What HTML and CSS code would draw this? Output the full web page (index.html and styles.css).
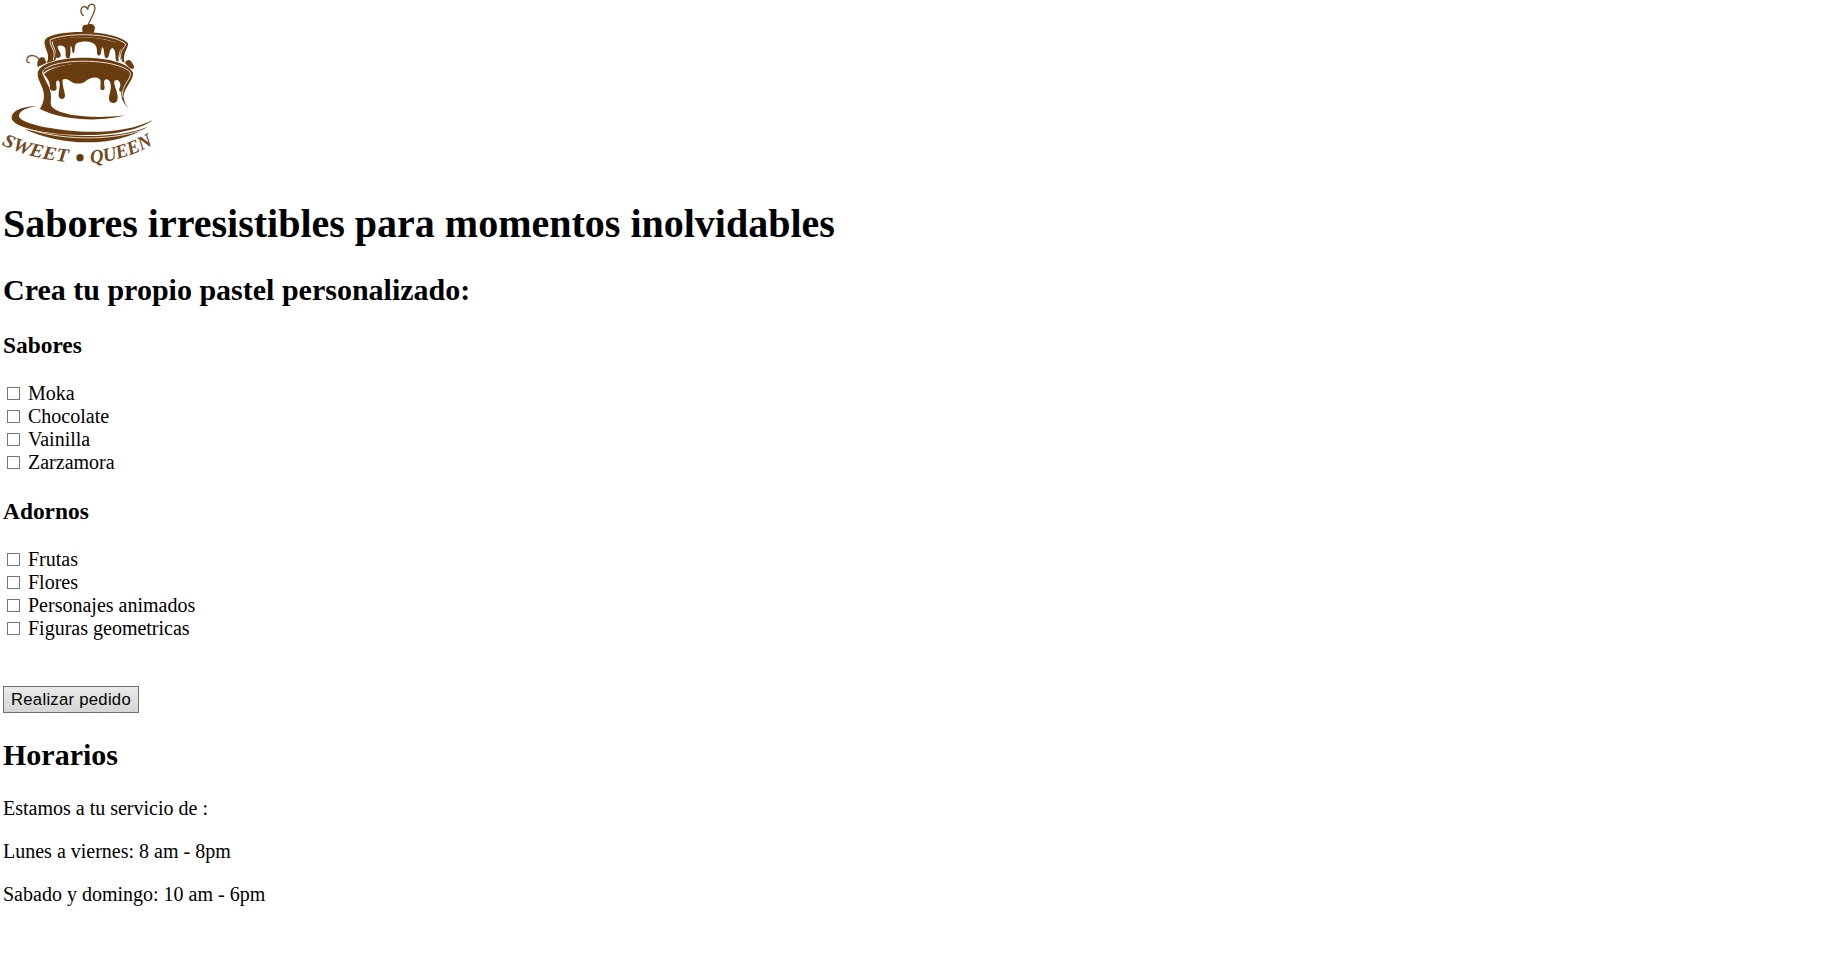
FILE: index.html
```html
<!DOCTYPE html>
<html lang="es">
<head>
<meta charset="utf-8">
<title>Sweet Queen</title>
<link rel="stylesheet" href="styles.css">
</head>
<body>
<header class="brand">
<svg class="logo" viewBox="9 9 456 495" role="img" aria-label="Sweet Queen">
  <defs>
    <path id="arc-left" d="M4 433 Q85 478 225 488"/>
    <path id="arc-right" d="M272 490 Q380 482 472 427"/>
  </defs>
  <!-- cherry -->
  <path class="line" d="M264 76 C273 52 290 32 284 18 C277 8 263 14 263 29 C258 14 244 19 243 30 C242 38 246 44 250 47"/>
  <path class="fill" d="M247 83 C249 71 262 77 267 73 C275 69 288 76 284 88 L281 98 L249 98 C247 94 246 89 247 83Z"/>
  <!-- top tier -->
  <path class="fill" d="M137 117 C165 89 342 86 384 130 C386 145 366 160 374 188 L364 184 C352 160 364 152 366 138 C320 105 200 105 155 126 C158 145 172 155 167 180 L140 190 C154 160 130 145 134 122Z"/>
  <path class="fill" d="M158 125 C200 105 320 107 370 139 C357 150 354 168 356 184 L349 184 C344 170 350 152 338 144 C326 145 330 174 320 175 C309 174 316 148 307 142 C302 145 307 165 297 167 C287 166 294 151 288 139 C280 120 235 122 228 132 C221 141 227 158 220 159 C214 157 219 142 212 137 C210 145 215 174 204 175 C192 174 200 153 195 143 C188 135 178 135 173 139 C173 152 184 157 182 169 C177 177 169 174 166 170 C171 150 161 145 158 125Z"/>
  <path class="gap" d="M378 133 C336 96 190 98 150 120 C150 145 169 148 160 180 M378 133 C370 148 354 158 366 186"/>
  <!-- side cherries -->
  <path class="line" d="M119 182 C111 164 86 161 81 177 C79 184 83 188 88 188"/>
  <path class="fill" d="M113 201 C109 185 117 171 127 172 C137 172 134 181 140 188Z M375 190 C378 177 392 177 396 188 C400 195 405 198 400 207 L390 205Z"/>
  <!-- bottom tier -->
  <path class="fill" d="M113 222 C113 160 370 155 399 218 C402 240 372 262 371 289 C372 306 377 314 386 324 C364 306 360 284 367 263 C374 246 390 232 386 222 C340 184 180 180 130 218 C127 236 154 257 153 291 C153 305 150 314 157 322 C190 353 301 355 374 346 C308 366 190 363 120 327 C151 275 113 252 113 222Z"/>
  <path class="fill" d="M132 222 C180 178 340 180 391 224 C385 240 372 250 370 267 C367 280 355 277 358 266 C365 254 359 241 350 240 C333 242 351 266 353 288 C354 303 349 309 340 309 C328 309 325 299 328 286 C333 268 337 244 321 238 C307 239 314 252 314 264 C313 273 302 273 301 264 C302 250 304 243 298 236 C283 228 266 236 255 245 C245 252 226 253 215 246 C205 238 195 234 188 239 C186 259 195 274 195 288 C194 300 178 299 176 288 C175 273 184 250 176 242 C165 239 169 256 170 264 C170 276 149 275 149 263 C152 248 142 235 132 222Z"/>
  <path class="gap" d="M131 228 C124 214 130 208 143 202 C190 175 340 177 386 212 C400 222 383 240 376 254 C366 270 367 284 369 292"/>
  <!-- plate -->
  <path class="fill" d="M107 319 C58 319 27 340 37 360 C65 408 370 432 459 359 C405 388 330 397 260 395 C160 391 56 370 57 347 C58 333 78 324 107 319Z"/>
  <path class="fill" d="M72 387 C180 412 350 420 443 380 C350 442 190 441 72 387Z"/>
  <path class="gap" d="M95 390 C200 424 350 420 436 387"/>
  <text class="name"><textPath href="#arc-left" textLength="208" lengthAdjust="spacingAndGlyphs">SWEET</textPath></text>
  <circle class="fill" cx="240" cy="473" r="11"/>
  <text class="name"><textPath href="#arc-right" textLength="198" lengthAdjust="spacingAndGlyphs">QUEEN</textPath></text>
</svg>
</header>
<main>
<h1>Sabores irresistibles para momentos inolvidables</h1>
<h2>Crea tu propio pastel personalizado:</h2>
<form class="order">
<h3>Sabores</h3>
<label class="option"><input type="checkbox">Moka</label>
<label class="option"><input type="checkbox">Chocolate</label>
<label class="option"><input type="checkbox">Vainilla</label>
<label class="option"><input type="checkbox">Zarzamora</label>
<h3 class="extras">Adornos</h3>
<label class="option"><input type="checkbox">Frutas</label>
<label class="option"><input type="checkbox">Flores</label>
<label class="option"><input type="checkbox">Personajes animados</label>
<label class="option"><input type="checkbox">Figuras geometricas</label>
<button class="submit" type="button">Realizar pedido</button>
</form>
</main>
<footer>
<h2>Horarios</h2>
<p>Estamos a tu servicio de :</p>
<p>Lunes a viernes: 8 am - 8pm</p>
<p>Sabado y domingo: 10 am - 6pm</p>
</footer>
</body>
</html>
```
FILE: styles.css
```css
body {
  margin: 0;
  padding: 3px 3px 0;
  background: #fff;
  color: #000;
  font: 20px/23px "Liberation Serif", "Times New Roman", serif;
}
.brand { height: 170px; }
.logo { display: block; width: 152px; height: 165px; overflow: visible; }
.fill { fill: #693c10; }
.line { fill: none; stroke: #79522c; stroke-width: 4; stroke-linecap: round; }
.gap { fill: none; stroke: #e9e0d8; stroke-width: 3; }
.name {
  fill: #75491f;
  font: italic bold 58px "Liberation Serif", serif;
}
h1 { margin: 28px 0 26px; font-size: 40px; line-height: 46px; }
h2 { margin: 25px 0; font-size: 30px; line-height: 34px; }
h3 { margin: 23px 0; font-size: 23.4px; line-height: 27px; }
.extras { margin-top: 24px; }
p { margin: 20px 0; }
.option { display: flex; align-items: center; height: 23px; }
.option input {
  appearance: none;
  box-sizing: border-box;
  width: 13px;
  height: 13px;
  margin: 0 8px 1px 4px;
  border: 1px solid #767676;
  background: #fff;
}
.submit {
  display: block;
  box-sizing: border-box;
  width: 136px;
  height: 27px;
  margin: 46px 0 0;
  padding: 0;
  border: 1px solid #707070;
  border-radius: 0;
  background: linear-gradient(#e9e9e9, #d6d6d6);
  color: #000;
  font: 16.67px/23px "Liberation Sans", Arial, sans-serif;
  letter-spacing: 0.28px;
}
```
